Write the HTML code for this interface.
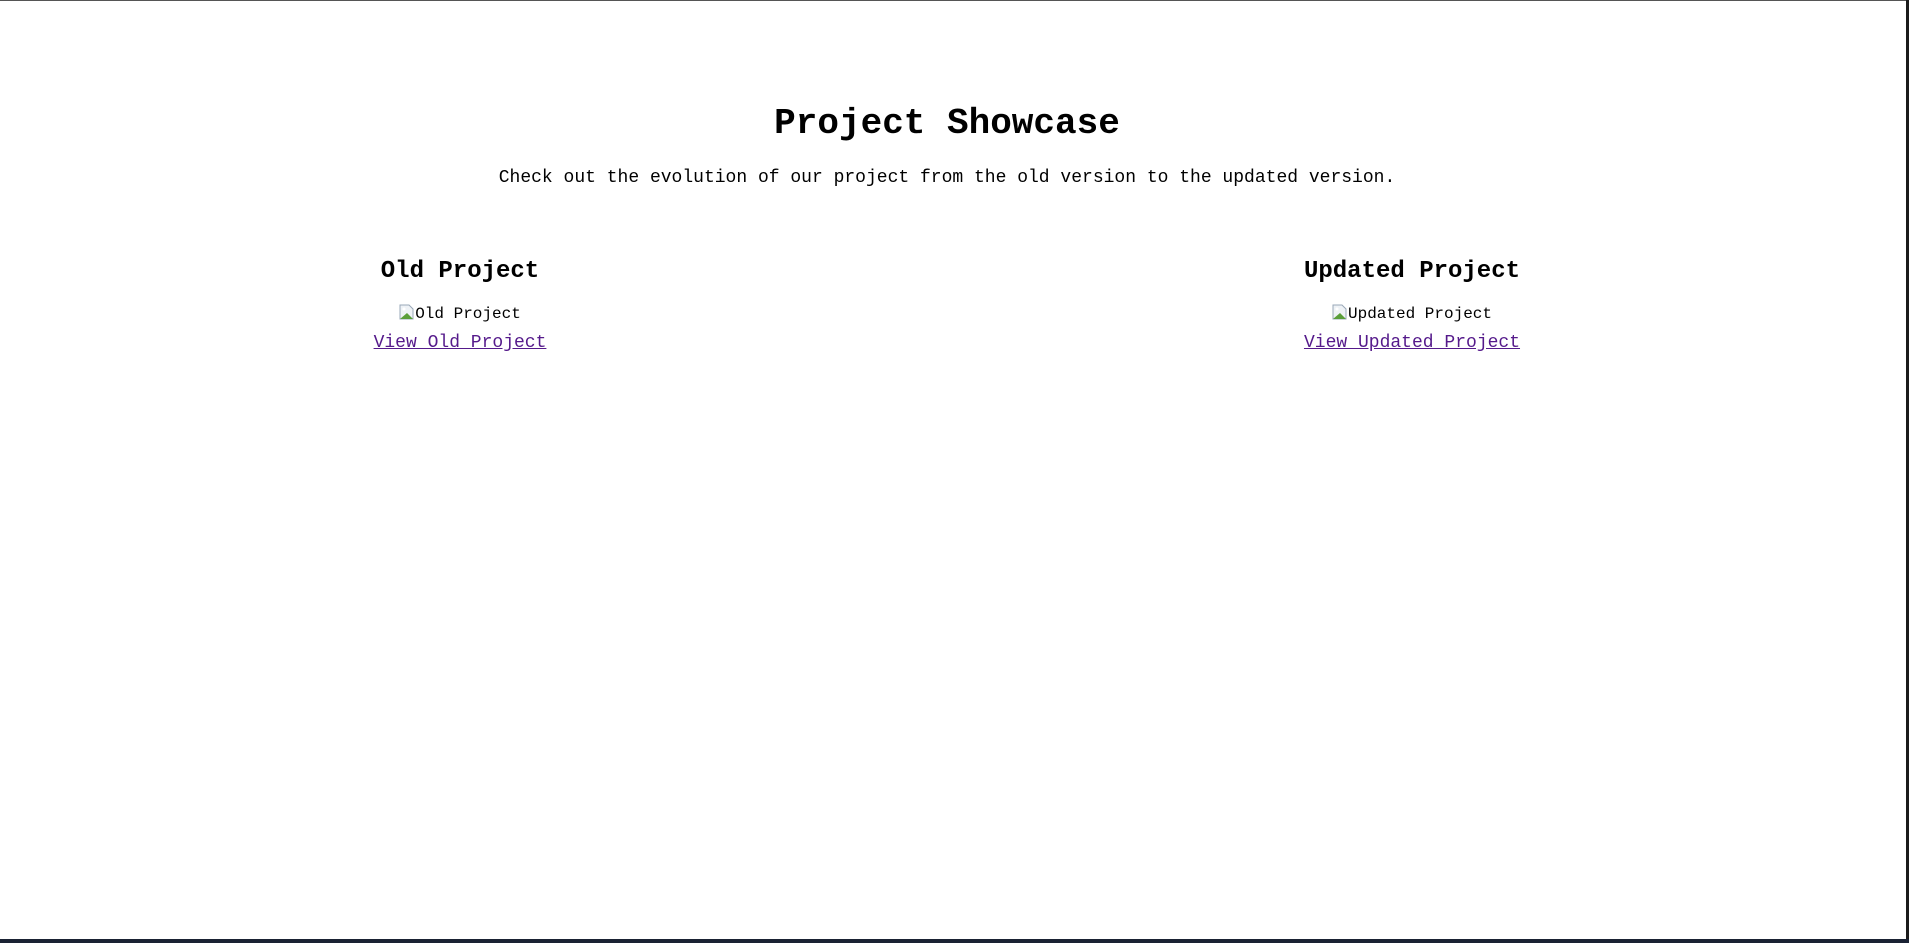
<!DOCTYPE html>
<html><head><meta charset="utf-8"><style>
html,body{margin:0;padding:0;width:1909px;height:943px;overflow:hidden;background:#fff;position:relative;font-family:"Liberation Mono","Courier New",monospace;color:#000}
.c{position:absolute;text-align:center;white-space:nowrap;width:1200px}
.top{position:absolute;left:0;top:0;width:1909px;height:1px;background:#555}
.right{position:absolute;right:0;top:0;width:3px;height:943px;background:#1b1b1b}
.bot{position:absolute;left:0;bottom:0;width:1909px;height:4px;background:#1a2233}
a{color:#551a8b;text-decoration:underline}
svg{vertical-align:-2px}
</style></head><body>
<div class="top"></div>
<div class="c" style="left:347px;top:102px;font-size:36px;line-height:44px;font-weight:bold">Project Showcase</div>
<div class="c" style="left:347px;top:166px;font-size:18px;line-height:24px">Check out the evolution of our project from the old version to the updated version.</div>

<div class="c" style="left:-140px;top:257px;font-size:24px;line-height:30px;font-weight:bold">Old Project</div>
<div class="c" style="left:-140px;top:304px;font-size:16px;line-height:20px"><svg width="16" height="16" viewBox="0 0 16 16"><path d="M1 1h9l4 4v10H1z" fill="#eef2f6" stroke="#9aa8b8"/><path d="M1 15L8 9l6 6z" fill="#5a9e3a"/><circle cx="5" cy="5" r="1.5" fill="#fff"/></svg>Old Project</div>
<div class="c" style="left:-140px;top:331px;font-size:18px;line-height:24px"><a>View Old Project</a></div>

<div class="c" style="left:812px;top:257px;font-size:24px;line-height:30px;font-weight:bold">Updated Project</div>
<div class="c" style="left:812px;top:304px;font-size:16px;line-height:20px"><svg width="16" height="16" viewBox="0 0 16 16"><path d="M1 1h9l4 4v10H1z" fill="#eef2f6" stroke="#9aa8b8"/><path d="M1 15L8 9l6 6z" fill="#5a9e3a"/><circle cx="5" cy="5" r="1.5" fill="#fff"/></svg>Updated Project</div>
<div class="c" style="left:812px;top:331px;font-size:18px;line-height:24px"><a>View Updated Project</a></div>

<div class="right"></div>
<div class="bot"></div>
</body></html>
